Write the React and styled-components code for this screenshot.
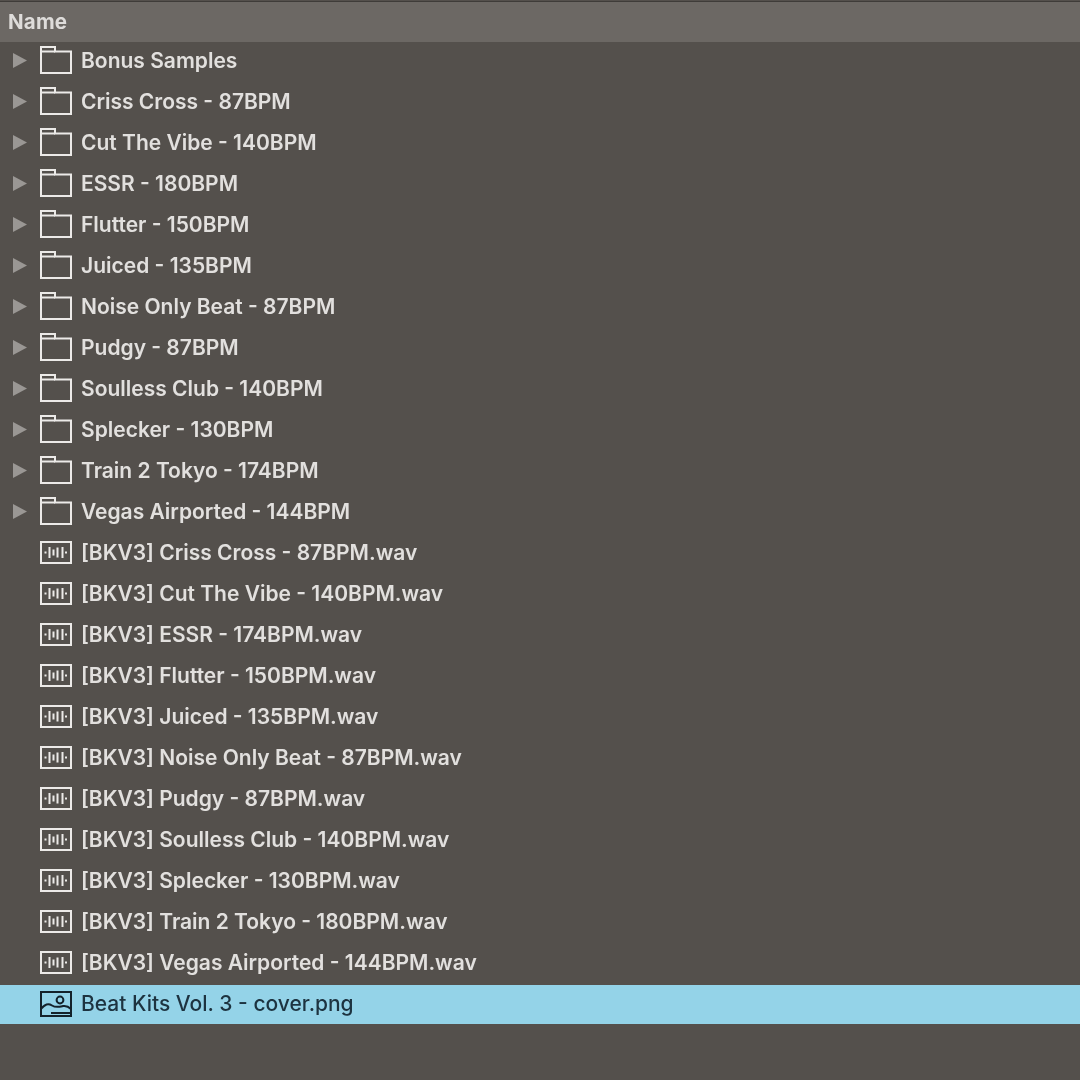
import React from "react";
import styled, { createGlobalStyle } from "styled-components";

const GlobalStyle = createGlobalStyle`
  html, body {
    margin: 0;
    padding: 0;
    background: #54504c;
  }
`;

const Browser = styled.div`
  width: 1080px;
  height: 1080px;
  overflow: hidden;
  box-sizing: border-box;
  background: #54504c;
  font-family: Inter, "Noto Sans", sans-serif;
  filter: blur(0.7px);
`;

const Header = styled.div`
  box-sizing: border-box;
  height: 41px;
  margin-top: 1px;
  padding: 0 8px 2px;
  display: flex;
  align-items: center;
  background: #6c6864;
  border-top: 1px solid #3f3c39;
  color: #dedcda;
  font-size: 20.5px;
  font-weight: 700;
  letter-spacing: 0.2px;
`;

const List = styled.div`
  display: flex;
  flex-direction: column;
  margin-top: -2.5px;
`;

const Row = styled.div`
  box-sizing: border-box;
  height: ${(p) => (p.$selected ? "39px" : "41px")};
  margin-top: ${(p) => (p.$selected ? "2px" : "0")};
  padding-bottom: ${(p) => (p.$selected ? "1px" : "0")};
  display: flex;
  align-items: center;
  color: ${(p) => (p.$selected ? "#1d3340" : "#e2e0de")};
  background: ${(p) => (p.$selected ? "#94d3e8" : "transparent")};
`;

const Arrow = styled.div`
  width: 39.5px;
  flex: none;
  display: flex;
  padding-left: 13px;
  box-sizing: border-box;
`;

const Label = styled.span`
  margin-left: 9.5px;
  font-size: 21px;
  font-weight: ${(p) => (p.$selected ? 500 : 600)};
  white-space: nowrap;
`;

const Triangle = () => (
  <svg width="14" height="15" viewBox="0 0 14 15">
    <path d="M0 0 L14 7.5 L0 15 Z" fill="#9a9794" />
  </svg>
);

const FolderIcon = () => (
  <svg width="32" height="28" viewBox="0 0 32 28" fill="none" stroke="#ecEAe8" strokeWidth="2">
    <path d="M1 27 V1 H15 V5.5 H31 V27 Z" />
    <path d="M1 5.5 H15" />
  </svg>
);

const AudioIcon = () => (
  <svg width="32" height="23" viewBox="0 0 32 23" fill="none" stroke="#ecEAe8">
    <rect x="1" y="1" width="30" height="21" strokeWidth="2" />
    <path
      d="M4.5 11.5 H6.5 M9.5 6 V17 M13.5 8.5 V14.5 M17.5 6.5 V16.5 M22.5 6 V17 M26 10.5 V12.5"
      strokeWidth="2"
    />
  </svg>
);

const ImageIcon = () => (
  <svg width="32" height="26" viewBox="0 0 32 26" fill="none" stroke="#14222b" strokeWidth="2">
    <rect x="1" y="1" width="30" height="24" />
    <circle cx="20" cy="9" r="3.4" />
    <path d="M1 18 C5 13 8 12 12 14.5 C16 17 19 16 23 15 C26 14.5 29 16 31 18" />
    <path d="M11 22 H31" />
  </svg>
);

const folders = [
  "Bonus Samples",
  "Criss Cross - 87BPM",
  "Cut The Vibe - 140BPM",
  "ESSR - 180BPM",
  "Flutter - 150BPM",
  "Juiced - 135BPM",
  "Noise Only Beat - 87BPM",
  "Pudgy - 87BPM",
  "Soulless Club - 140BPM",
  "Splecker - 130BPM",
  "Train 2 Tokyo - 174BPM",
  "Vegas Airported - 144BPM",
];

const audioFiles = [
  "[BKV3] Criss Cross - 87BPM.wav",
  "[BKV3] Cut The Vibe - 140BPM.wav",
  "[BKV3] ESSR - 174BPM.wav",
  "[BKV3] Flutter - 150BPM.wav",
  "[BKV3] Juiced - 135BPM.wav",
  "[BKV3] Noise Only Beat - 87BPM.wav",
  "[BKV3] Pudgy - 87BPM.wav",
  "[BKV3] Soulless Club - 140BPM.wav",
  "[BKV3] Splecker - 130BPM.wav",
  "[BKV3] Train 2 Tokyo - 180BPM.wav",
  "[BKV3] Vegas Airported - 144BPM.wav",
];

export default function App() {
  return (
    <>
      <GlobalStyle />
      <Browser>
        <Header>Name</Header>
        <List>
          {folders.map((name) => (
            <Row key={name}>
              <Arrow>
                <Triangle />
              </Arrow>
              <FolderIcon />
              <Label>{name}</Label>
            </Row>
          ))}
          {audioFiles.map((name) => (
            <Row key={name}>
              <Arrow />
              <AudioIcon />
              <Label>{name}</Label>
            </Row>
          ))}
          <Row $selected>
            <Arrow />
            <ImageIcon />
            <Label $selected>Beat Kits Vol. 3 - cover.png</Label>
          </Row>
        </List>
      </Browser>
    </>
  );
}
